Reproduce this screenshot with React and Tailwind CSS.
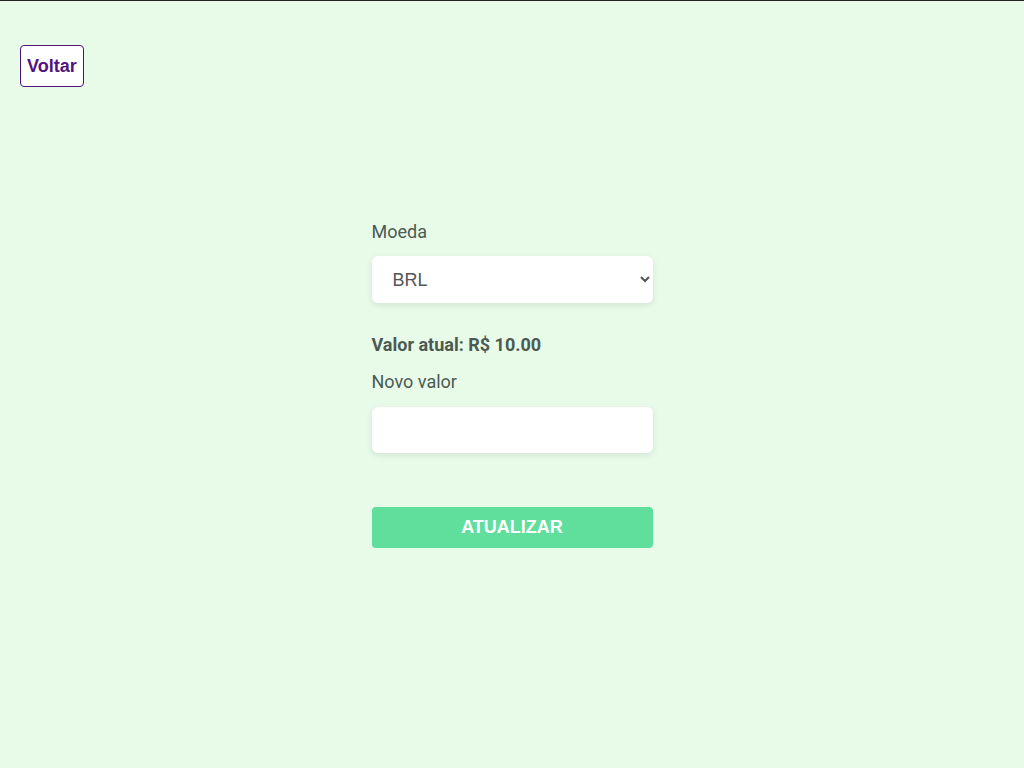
import React, { useState } from 'react';

const App = () => {
  const [currency, setCurrency] = useState('BRL');
  const [newValue, setNewValue] = useState('');

  const handleSubmit = (e) => {
    e.preventDefault();
  };

  return (
    <div className="h-screen w-screen overflow-scroll bg-[#e8fbe9]">
      <div className="w-[1033px] min-h-[788px] pr-[9px] bg-[#e8fbe9] border-t border-[#222] font-['Roboto',sans-serif]">
        <div className="pt-11 pl-5">
          <button
            type="button"
            className="h-[42px] px-[6px] bg-white border border-[#4b1478] rounded-[4px] text-[18px] font-bold text-[#52157f] font-['Liberation_Sans',Arial,sans-serif]"
          >
            Voltar
          </button>
        </div>

        <form onSubmit={handleSubmit} className="mx-auto mt-[131px] w-[281px] flex flex-col">
          <label className="text-[18px] leading-[27px] text-[#4b5a52]">Moeda</label>
          <select
            value={currency}
            onChange={(e) => setCurrency(e.target.value)}
            className="mt-[11px] h-[47px] pl-[17px] pr-2 bg-white rounded-[6px] border-0 text-[18px] text-[#555] font-['Liberation_Sans',Arial,sans-serif] shadow-[0_2px_6px_rgba(0,0,0,0.1)] outline-none"
          >
            <option value="BRL">BRL</option>
            <option value="USD">USD</option>
            <option value="EUR">EUR</option>
          </select>

          <p className="mt-[28px] text-[18px] leading-[27px] font-bold text-[#4b5a52]">Valor atual: R$ 10.00</p>

          <label className="mt-[10px] text-[18px] leading-[27px] text-[#4b5a52]">Novo valor</label>
          <input
            type="number"
            value={newValue}
            onChange={(e) => setNewValue(e.target.value)}
            className="mt-3 h-[46px] px-5 bg-white rounded-[6px] text-[18px] text-[#555] shadow-[0_2px_6px_rgba(0,0,0,0.1)] outline-none"
          />

          <button
            type="submit"
            className="mt-[54px] h-[41px] bg-[#5fdf9b] rounded-[4px] text-white text-[18px] font-bold uppercase font-['Liberation_Sans',Arial,sans-serif]"
          >
            Atualizar
          </button>
        </form>
      </div>
    </div>
  );
};

export default App;
